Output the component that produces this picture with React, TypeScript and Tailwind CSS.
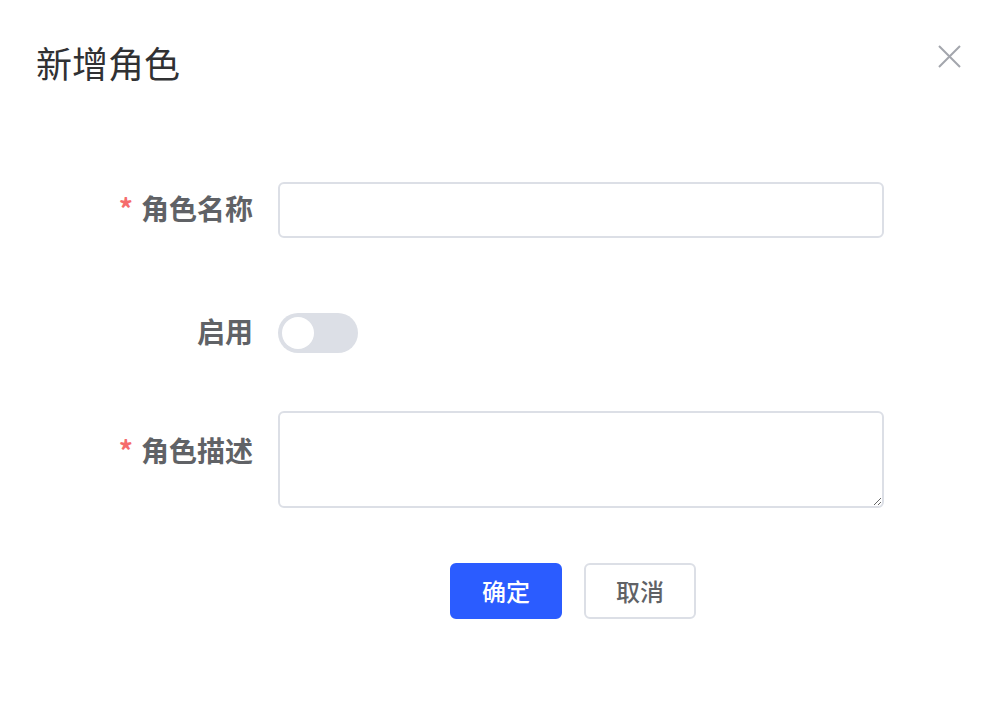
import { useState } from "react";

const font = "font-['Noto_Sans_CJK_SC','Noto_Sans',sans-serif]";

export default function App() {
  const [enabled, setEnabled] = useState(false);

  return (
    <div className={`relative h-[720px] w-[1001px] bg-white ${font}`}>
      <div className="flex items-start justify-between pl-[36px] pr-[40px] pt-[36px]">
        <h1 className="text-[36px] font-normal leading-[52px] text-[#303133]">新增角色</h1>
        <button className="mt-[9px] text-[#a3a6ad]">
          <svg width="23" height="23" viewBox="0 0 23 23" fill="none" stroke="currentColor" strokeWidth="2">
            <path d="M1 1 L22 22 M22 1 L1 22" />
          </svg>
        </button>
      </div>

      <div className="mt-[94px] flex flex-col">
        <div className="flex items-start">
          <label className="w-[253px] pb-[3px] text-right text-[28px] font-bold leading-[53px] text-[#606266]">
            <span className="mr-[8px] text-[#f56c6c]">*</span>角色名称
          </label>
          <input
            className="ml-[25px] h-[56px] w-[606px] rounded-[6px] border-2 border-[#dcdfe6] px-4 text-[24px] outline-none"
          />
        </div>

        <div className="mt-[75px] flex items-start">
          <label className="w-[253px] text-right text-[28px] font-bold leading-[37px] text-[#606266]">启用</label>
          <button
            onClick={() => setEnabled(!enabled)}
            className={`ml-[25px] flex h-[40px] w-[80px] items-center rounded-full px-[4px] ${
              enabled ? "justify-end bg-[#2b5cff]" : "justify-start bg-[#dcdfe6]"
            }`}
          >
            <span className="h-[32px] w-[32px] rounded-full bg-white" />
          </button>
        </div>

        <div className="mt-[58px] flex items-start">
          <label className="w-[253px] pt-[23px] text-right text-[28px] font-bold leading-[32px] text-[#606266]">
            <span className="mr-[8px] text-[#f56c6c]">*</span>角色描述
          </label>
          <textarea
            className="ml-[25px] h-[97px] w-[606px] rounded-[6px] border-2 border-[#dcdfe6] px-4 py-2 text-[24px] outline-none"
          />
        </div>

        <div className="mt-[55px] flex gap-[22px] pl-[450px]">
          <button className="h-[56px] w-[112px] rounded-[6px] border-2 border-[#2b5cff] bg-[#2b5cff] text-[24px] font-medium text-white">
            确定
          </button>
          <button className="h-[56px] w-[112px] rounded-[6px] border-2 border-[#dcdfe6] bg-white text-[24px] font-medium text-[#606266]">
            取消
          </button>
        </div>
      </div>
    </div>
  );
}
